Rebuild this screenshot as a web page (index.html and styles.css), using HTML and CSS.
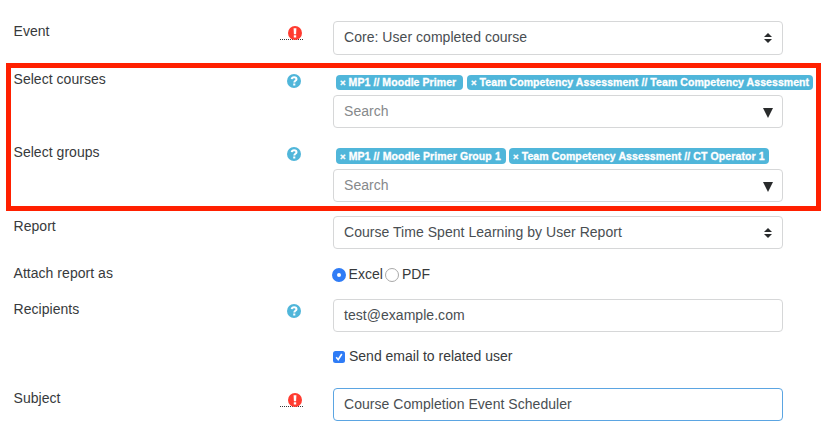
FILE: index.html
```html
<!DOCTYPE html>
<html lang="en">
<head>
    <meta charset="UTF-8">
    <meta name="viewport" content="width=device-width, initial-scale=1.0">
    <title>Event Scheduler</title>
    <link rel="stylesheet" href="styles.css">
</head>
<body>
    <svg class="defs">
        <symbol id="required" viewBox="0 0 14 14">
            <circle cx="7" cy="7" r="7" fill="#ff3b30"/>
            <path d="M5.6 2.2h2.8L8.1 8.2H5.9zM5.8 9.3h2.4v2.3H5.8z" fill="#fff"/>
        </symbol>
        <symbol id="help" viewBox="0 0 14 14">
            <circle cx="7" cy="7" r="7" fill="#50b6da"/>
            <path d="M4.7 5.1C4.9 3.8 5.8 3.2 7.1 3.2c1.4 0 2.4.8 2.4 2 0 1.6-2.2 1.6-2.2 3.2" fill="none" stroke="#fff" stroke-width="2"/>
            <path d="M6.2 9.5h2.1v2H6.2z" fill="#fff"/>
        </symbol>
        <symbol id="sort" viewBox="0 0 8 10">
            <path d="M4 0l4 4H0zM0 6h8l-4 4z" fill="#292b2c"/>
        </symbol>
        <symbol id="down" viewBox="0 0 10 10">
            <path d="M0 0h10L5 10z" fill="#292b2c"/>
        </symbol>
    </svg>
    <form class="form">
        <div class="row row-event">
            <span class="name">Event</span>
            <span class="mark"><svg class="icon"><use href="#required"/></svg></span>
            <div class="control"><span>Core: User completed course</span><svg class="sort"><use href="#sort"/></svg></div>
        </div>
        <div class="highlight">
            <div class="row row-courses">
                <span class="name">Select courses</span>
                <span class="mark help"><svg class="icon"><use href="#help"/></svg></span>
                <div class="field">
                    <div class="tags">
                        <span class="tag tag-primer"><span class="remove">×</span> MP1 // Moodle Primer</span>
                        <span class="tag tag-team"><span class="remove">×</span> Team Competency Assessment // Team Competency Assessment</span>
                    </div>
                    <div class="control search"><span>Search</span><svg class="down"><use href="#down"/></svg></div>
                </div>
            </div>
            <div class="row row-groups">
                <span class="name">Select groups</span>
                <span class="mark help"><svg class="icon"><use href="#help"/></svg></span>
                <div class="field">
                    <div class="tags tags-groups">
                        <span class="tag tag-group"><span class="remove">×</span> MP1 // Moodle Primer Group 1</span>
                        <span class="tag tag-operator"><span class="remove">×</span> Team Competency Assessment // CT Operator 1</span>
                    </div>
                    <div class="control search"><span>Search</span><svg class="down"><use href="#down"/></svg></div>
                </div>
            </div>
        </div>
        <div class="row row-report">
            <span class="name">Report</span>
            <span></span>
            <div class="control"><span>Course Time Spent Learning by User Report</span><svg class="sort"><use href="#sort"/></svg></div>
        </div>
        <div class="row row-attach">
            <span class="name">Attach report as</span>
            <span></span>
            <div class="options">
                <span class="radio checked"></span><span class="excel">Excel</span>
                <span class="radio"></span><span>PDF</span>
            </div>
        </div>
        <div class="row row-recipients">
            <span class="name">Recipients</span>
            <span class="mark help"><svg class="icon"><use href="#help"/></svg></span>
            <div class="control"><span>test@example.com</span></div>
        </div>
        <div class="row row-send">
            <span></span>
            <span></span>
            <div class="send">
                <svg class="checkbox" viewBox="0 0 12 12"><rect width="12" height="12" rx="2.5" fill="#2f7cf6"/><path d="M3.2 6.3l2 2.4 3.6-5.7" fill="none" stroke="#fff" stroke-width="1.6"/></svg>
                <span>Send email to related user</span>
            </div>
        </div>
        <div class="row">
            <span class="name">Subject</span>
            <span class="mark"><svg class="icon"><use href="#required"/></svg></span>
            <div class="control focused"><span>Course Completion Event Scheduler</span></div>
        </div>
    </form>
</body>
</html>
```

FILE: styles.css
```css
* {
    box-sizing: border-box;
}
body {
    margin: 0;
    background-color: #fff;
    color: #373a3c;
    font-family: "Liberation Sans", Arial, sans-serif;
    font-size: 14px;
    line-height: 20px;
    letter-spacing: 0.04px;
    white-space: nowrap;
}
.defs {
    display: none;
}
.form {
    width: 832px;
    height: 432px;
    padding-top: 21px;
    overflow: hidden;
}
.row {
    display: grid;
    grid-template-columns: 267px 53px 450px;
    align-items: start;
    padding-left: 13px;
}
.row-event {
    height: 42px;
}
.highlight {
    width: 815px;
    height: 148px;
    margin-left: 6px;
    padding-top: 1px;
    border: 5px solid #ff2000;
}
.highlight .row {
    padding-left: 2px;
}
.row-courses {
    height: 73px;
}
.row-report {
    height: 52px;
    padding-top: 5px;
}
.row-attach {
    height: 36px;
}
.row-recipients {
    height: 48px;
}
.row-send {
    height: 41px;
}
.name {
    padding-left: 0.5px;
}
.mark {
    display: flex;
    width: 23px;
    height: 19px;
    padding: 5px 0 0 8px;
    border-bottom: 1px dotted #373a3c;
}
.help {
    padding-left: 7px;
    border-bottom: none;
}
.icon {
    width: 14px;
    height: 14px;
    flex: none;
}
.control {
    display: flex;
    align-items: center;
    justify-content: space-between;
    width: 450px;
    height: 33px;
    padding: 0 10px;
    border: 1px solid #d6d7d8;
    border-radius: 4px;
    color: #494e52;
}
.control span {
    padding-bottom: 1px;
}
.row-event .control {
    height: 34px;
}
.row-event .control span {
    padding-bottom: 2px;
}
.focused {
    border-color: #5ba5e2;
}
.search {
    color: #86898b;
}
.sort {
    width: 8px;
    height: 10px;
}
.down {
    width: 10px;
    height: 10px;
    margin-top: 2px;
    margin-right: -1px;
}
.tags {
    display: flex;
    gap: 4px;
    height: 26px;
    padding: 6px 0 5px 3px;
}
.tags-groups {
    gap: 3px;
    height: 27px;
}
.tag {
    flex: none;
    padding-left: 4px;
    border-radius: 4px;
    background-color: #50b6da;
    color: #fff;
    font-size: 10.5px;
    font-weight: bold;
    line-height: 15px;
    letter-spacing: 0.07px;
    -webkit-text-stroke: 0.3px #fff;
}
.tags-groups .tag {
    line-height: 17px;
}
.remove {
    font-size: 9.5px;
}
.tag-primer {
    width: 127px;
}
.tag-team {
    width: 346px;
}
.tag-group {
    width: 170px;
    letter-spacing: 0.1px;
}
.tag-operator {
    width: 260px;
    letter-spacing: 0.1px;
}
.options {
    display: flex;
    align-items: center;
    height: 22px;
}
.radio {
    width: 14px;
    height: 14px;
    margin: 2px 2.5px 0 -1px;
    border: 1px solid #a9a9a9;
    border-radius: 50%;
}
.checked {
    border: 5px solid #2f7cf6;
    background-color: #fff;
}
.excel {
    margin-right: 3.5px;
}
.send {
    display: flex;
    align-items: center;
    gap: 4px;
    height: 20px;
    letter-spacing: 0;
}
.send span {
    padding-bottom: 2px;
}
.checkbox {
    width: 12px;
    height: 12px;
}
```
